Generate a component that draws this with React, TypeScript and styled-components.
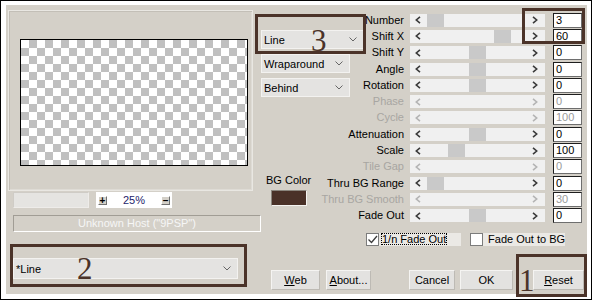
import React from "react";
import styled, { createGlobalStyle } from "styled-components";

const Global = createGlobalStyle`
  html, body { margin: 0; padding: 0; background: #fff; }
  body {
    font-family: "Liberation Sans", Arial, sans-serif;
    font-size: 11px;
    color: #000;
  }
`;

const INK = "#4b3329";

const Frame = styled.div`
  position: relative;
  width: 592px;
  height: 300px;
  box-sizing: border-box;
  border: 1px solid #000;
  padding: 4px 4px 5px 5px;
  background: #fff;
`;

const Panel = styled.div`
  display: flex;
  width: 581px;
  height: 289px;
  background: #d4d0c8;
`;

const LeftCol = styled.div`
  display: flex;
  flex-direction: column;
  width: 255px;
  flex: none;
`;

const GroupBox = styled.div`
  margin: 5px 0 0 2px;
  width: 245px;
  height: 181px;
  box-sizing: border-box;
  border: 1px solid #e9e7e2;
  box-shadow: inset 1px 1px 0 #c3bfb7, inset -1px -1px 0 #dedbd5;
  padding: 28px 0 0 11px;
`;

const Preview = styled.div`
  width: 228px;
  height: 127px;
  box-sizing: border-box;
  border: 1px solid #000;
  background: repeating-conic-gradient(#c0c0c0 0% 25%, #ffffff 0% 50%) 0 0 / 16px 16px;
`;

const ZoomRow = styled.div`
  display: flex;
  gap: 7px;
  margin: 1px 0 0 7px;
  height: 16px;
`;

const BlankField = styled.div`
  width: 76px;
  height: 16px;
  box-sizing: border-box;
  background: #e5e4e1;
  border: 1px solid #cfccc6;
  border-right-color: #eeece9;
  border-bottom-color: #eeece9;
`;

const ZoomBox = styled.div`
  display: flex;
  align-items: center;
  width: 76px;
  height: 16px;
  box-sizing: border-box;
  background: #fff;
  padding: 0 2px 0 2px;
`;

const TinyButton = styled.div`
  display: flex;
  align-items: center;
  justify-content: center;
  width: 9px;
  height: 9px;
  box-sizing: border-box;
  background: #d4d0c8;
  border: 1px solid #fff;
  border-right-color: #707070;
  border-bottom-color: #707070;
  font-weight: bold;
  font-size: 10px;
  line-height: 7px;
`;

const ZoomValue = styled.div`
  flex: 1;
  text-align: center;
  color: #1d1d6b;
  font-size: 11px;
`;

const HostBox = styled.div`
  margin: 7px 0 0 7px;
  width: 248px;
  height: 17px;
  box-sizing: border-box;
  border: 1px solid #fff;
  border-top-color: #a19d95;
  border-left-color: #a19d95;
  color: #f6f6f6;
  text-align: center;
  line-height: 15px;
`;

const SelectBox = styled.div<{ $w: number; $mt?: number; $ml?: number; $h?: number }>`
  display: flex;
  align-items: center;
  justify-content: space-between;
  width: ${(p) => p.$w}px;
  height: ${(p) => p.$h ?? 19}px;
  margin-top: ${(p) => p.$mt ?? 0}px;
  margin-left: ${(p) => p.$ml ?? 0}px;
  box-sizing: border-box;
  background: #e4e3e1;
  border: 1px solid #f3f2f0;
  padding: 0 6px 0 2px;
  flex: none;
`;

const Chevron = () => (
  <svg width="8" height="5" viewBox="0 0 8 5">
    <polyline points="0.5,0.5 4,4 7.5,0.5" fill="none" stroke="#666" strokeWidth="1" />
  </svg>
);

const Select = ({ text, w, mt, ml, h }: { text: string; w: number; mt?: number; ml?: number; h?: number }) => (
  <SelectBox $w={w} $mt={mt} $ml={ml} $h={h}>
    <span>{text}</span>
    <Chevron />
  </SelectBox>
);

const RightPart = styled.div`
  display: flex;
  flex-direction: column;
  flex: 1;
`;

const ParamGrid = styled.div`
  display: grid;
  margin-top: 7px;
  grid-template-columns: 104px 39px 141px 37px;
  grid-template-rows: repeat(13, 16.3px);
`;

const MidCol = styled.div`
  grid-column: 1;
  grid-row: 1 / span 13;
  display: flex;
  flex-direction: column;
  gap: 5px;
  padding-top: 18px;
`;

const BgBlock = styled.div`
  display: flex;
  flex-direction: column;
  align-items: center;
  align-self: flex-start;
  margin: 72px 0 0 5px;
`;

const BgLabel = styled.div`
  line-height: 13px;
  white-space: nowrap;
`;

const Swatch = styled.div`
  width: 36px;
  height: 16px;
  margin-top: 3px;
  box-sizing: border-box;
  background: #4a3128;
  border: 1px solid #f4f3f1;
  border-top-color: #8a857d;
  border-left-color: #8a857d;
`;

const ParamLabel = styled.div<{ $row: number; $off?: boolean }>`
  grid-column: 1 / 3;
  grid-row: ${(p) => p.$row};
  justify-self: end;
  align-self: center;
  white-space: nowrap;
  line-height: 13px;
  color: ${(p) => (p.$off ? "#a8a6a2" : "#000")};
`;

const Track = styled.div<{ $row: number }>`
  grid-column: 3;
  grid-row: ${(p) => p.$row};
  position: relative;
  align-self: center;
  margin-left: 6px;
  height: 13px;
  background: #f0f0f0;
  display: flex;
  align-items: center;
  justify-content: space-between;
  padding: 0 7px 0 5px;
`;

const Thumb = styled.div`
  position: absolute;
  top: 0;
  width: 17px;
  height: 13px;
  background: #c9c9c9;
`;

const Arrow = ({ dir, off }: { dir: "l" | "r"; off?: boolean }) => (
  <svg width="6" height="8" viewBox="0 0 6 8" style={{ position: "relative", zIndex: 1 }}>
    <polyline
      points={dir === "l" ? "5,0.8 1.3,4 5,7.2" : "1,0.8 4.7,4 1,7.2"}
      fill="none"
      stroke={off ? "#b4b4b4" : "#3a3a3a"}
      strokeWidth="1.6"
    />
  </svg>
);

const NumInput = styled.div<{ $row: number; $off?: boolean }>`
  grid-column: 4;
  grid-row: ${(p) => p.$row};
  align-self: center;
  margin-left: 8px;
  width: 29px;
  height: 15px;
  box-sizing: border-box;
  background: #fff;
  border: 1px solid #6e6e6e;
  border-top-color: #1e1e1e;
  border-left-color: #1e1e1e;
  padding-left: 2px;
  line-height: 13px;
  color: ${(p) => (p.$off ? "#9a9a9a" : "#000")};
`;

const CheckRow = styled.div`
  display: flex;
  align-items: center;
  margin-top: 9px;
  padding-left: 105px;
  height: 13px;
`;

const CheckItem = styled.div<{ $ml?: number }>`
  display: flex;
  align-items: center;
  margin-left: ${(p) => p.$ml ?? 0}px;
`;

const CheckBoxSq = styled.div`
  width: 13px;
  height: 13px;
  box-sizing: border-box;
  background: #fff;
  border: 1px solid #7c7c7c;
  display: flex;
  align-items: center;
  justify-content: center;
`;

const CheckLabel = styled.div`
  width: 82px;
  height: 13px;
  box-sizing: border-box;
  background: #ebe9e5;
  padding-left: 2px;
  line-height: 13px;
  white-space: nowrap;
`;

const Focus = styled.span`
  outline: 1px dotted #000;
  outline-offset: -1px;
  padding: 0 1px;
`;

const ButtonRow = styled.div`
  display: flex;
  margin-top: 24px;
`;

const Button = styled.div<{ $w: number; $ml: number }>`
  width: ${(p) => p.$w}px;
  height: 20px;
  margin-left: ${(p) => p.$ml}px;
  box-sizing: border-box;
  background: #e3e2e0;
  border: 1px solid #f5f4f2;
  border-right-color: #bdbab4;
  border-bottom-color: #bdbab4;
  display: flex;
  align-items: center;
  justify-content: center;
  flex: none;
`;

const U = styled.span`
  text-decoration: underline;
`;

const Mark = styled.div<{ $x: number; $y: number; $w: number; $h: number }>`
  position: absolute;
  left: ${(p) => p.$x}px;
  top: ${(p) => p.$y}px;
  width: ${(p) => p.$w}px;
  height: ${(p) => p.$h}px;
  box-sizing: border-box;
  border: 3px solid ${INK};
  pointer-events: none;
`;

const Digit = styled.div<{ $x: number; $y: number }>`
  position: absolute;
  left: ${(p) => p.$x}px;
  top: ${(p) => p.$y}px;
  font-family: "Liberation Serif", "Times New Roman", serif;
  font-size: 31px;
  line-height: 1;
  color: ${INK};
  pointer-events: none;
`;

type Row = { label: string; value: string; thumb?: number };

const rows: Row[] = [
  { label: "Number", value: "3", thumb: 17 },
  { label: "Shift X", value: "60", thumb: 84 },
  { label: "Shift Y", value: "0", thumb: 59 },
  { label: "Angle", value: "0", thumb: 59 },
  { label: "Rotation", value: "0", thumb: 59 },
  { label: "Phase", value: "0" },
  { label: "Cycle", value: "100" },
  { label: "Attenuation", value: "0", thumb: 59 },
  { label: "Scale", value: "100", thumb: 38 },
  { label: "Tile Gap", value: "0" },
  { label: "Thru BG Range", value: "0", thumb: 17 },
  { label: "Thru BG Smooth", value: "30" },
  { label: "Fade Out", value: "0", thumb: 59 },
];

export default function App() {
  return (
    <>
      <Global />
      <Frame>
        <Panel>
          <LeftCol>
            <GroupBox>
              <Preview />
            </GroupBox>
            <ZoomRow>
              <BlankField />
              <ZoomBox>
                <TinyButton>+</TinyButton>
                <ZoomValue>25%</ZoomValue>
                <TinyButton>–</TinyButton>
              </ZoomBox>
            </ZoomRow>
            <HostBox>Unknown Host ("9PSP")</HostBox>
            <Select text="*Line" w={225} h={21} mt={26} ml={7} />
          </LeftCol>
          <RightPart>
            <ParamGrid>
              <MidCol>
                <Select text="Line" w={103} />
                <Select text="Wraparound" w={89} />
                <Select text="Behind" w={89} />
                <BgBlock>
                  <BgLabel>BG Color</BgLabel>
                  <Swatch />
                </BgBlock>
              </MidCol>
              {rows.map((r, i) => {
                const off = r.thumb === undefined;
                return (
                  <React.Fragment key={r.label}>
                    <ParamLabel $row={i + 1} $off={off}>
                      {r.label}
                    </ParamLabel>
                    <Track $row={i + 1}>
                      {!off && <Thumb style={{ left: r.thumb }} />}
                      <Arrow dir="l" off={off} />
                      <Arrow dir="r" off={off} />
                    </Track>
                    <NumInput $row={i + 1} $off={off}>
                      {r.value}
                    </NumInput>
                  </React.Fragment>
                );
              })}
            </ParamGrid>
            <CheckRow>
              <CheckItem>
                <CheckBoxSq>
                  <svg width="11" height="11" viewBox="0 0 11 11">
                    <polyline points="1.5,5.5 4.5,8.5 10,2" fill="none" stroke="#3c3c3c" strokeWidth="1.3" />
                  </svg>
                </CheckBoxSq>
                <CheckLabel>
                  <Focus>1/n Fade Out</Focus>
                </CheckLabel>
              </CheckItem>
              <CheckItem $ml={9}>
                <CheckBoxSq />
                <CheckLabel>&nbsp;Fade Out to BG</CheckLabel>
              </CheckItem>
            </CheckRow>
            <ButtonRow>
              <Button $w={49} $ml={10}>
                <U>W</U>eb
              </Button>
              <Button $w={45} $ml={6}>
                <U>A</U>bout...
              </Button>
              <Button $w={46} $ml={38}>
                Cancel
              </Button>
              <Button $w={53} $ml={5}>
                OK
              </Button>
              <Button $w={51} $ml={20}>
                <U>R</U>eset
              </Button>
            </ButtonRow>
          </RightPart>
        </Panel>
        <Mark $x={254} $y={13} $w={111} $h={40} />
        <Mark $x={9} $y={243} $w={237} $h={43} />
        <Mark $x={515} $y={253} $w={71} $h={43} />
        <Mark $x={521} $y={7} $w={63} $h={36} />
        <Digit $x={310} $y={24}>3</Digit>
        <Digit $x={76} $y={252}>2</Digit>
        <Digit $x={518} $y={264}>1</Digit>
      </Frame>
    </>
  );
}
